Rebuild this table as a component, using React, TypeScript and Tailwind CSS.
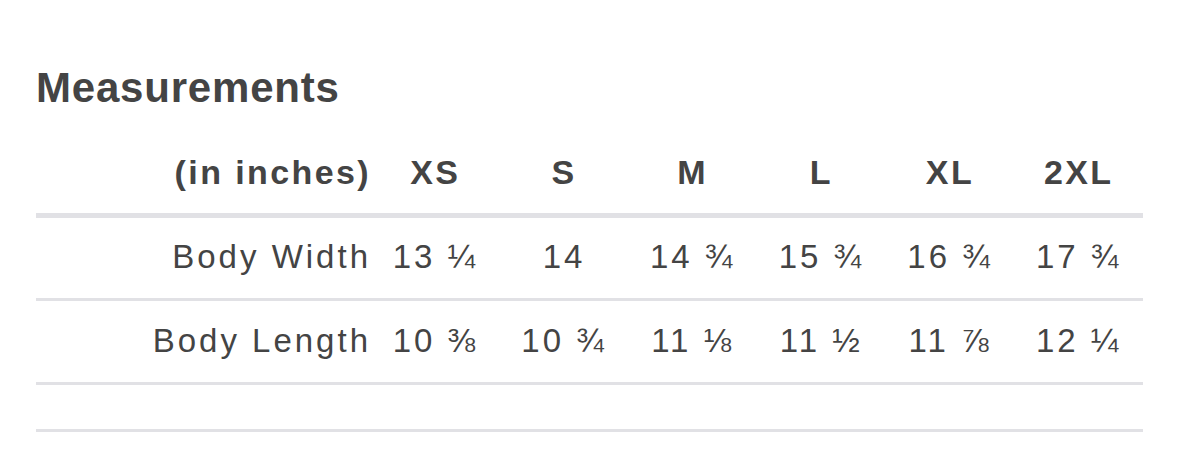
import React from 'react';

const SIZES = ['XS', 'S', 'M', 'L', 'XL', '2XL'];

const ROWS = [
  { label: 'Body Width', values: ['13 ¼', '14', '14 ¾', '15 ¾', '16 ¾', '17 ¾'] },
  { label: 'Body Length', values: ['10 ⅜', '10 ¾', '11 ⅛', '11 ½', '11 ⅞', '12 ¼'] },
];

const grid = 'grid grid-cols-[335px_repeat(6,1fr)]';

const App: React.FC = () => {
  return (
    <div
      className="w-[1179px] h-[472px] bg-white px-[36px] pt-[64px] text-[#444444]"
      style={{ fontFamily: '"Liberation Sans", Arial, sans-serif' }}
    >
      <h2 className="text-[42px] leading-[48px] font-bold tracking-[0.8px]">Measurements</h2>

      {/* header */}
      <div className={`${grid} mt-[42px] pb-[23px] border-b-[5px] border-[#e1e1e5] text-[34px] leading-[36px] font-bold tracking-[2.4px]`}>
        <div className="text-right">(in inches)</div>
        {SIZES.map(size => (
          <div key={size} className="text-center">{size}</div>
        ))}
      </div>

      {ROWS.map((row, i) => (
        <div
          key={row.label}
          className={`${grid} ${i === 0 ? 'pt-[21px]' : 'pt-[22px]'} pb-[23px] border-b-[3px] border-[#e1e1e5] text-[33px] leading-[36px] tracking-[3px]`}
        >
          <div className="text-right">{row.label}</div>
          {row.values.map((v, j) => (
            <div key={j} className="text-center">{v}</div>
          ))}
        </div>
      ))}

      <div className="h-[47px] border-b-[3px] border-[#e1e1e5]" />
    </div>
  );
};

export default App;
